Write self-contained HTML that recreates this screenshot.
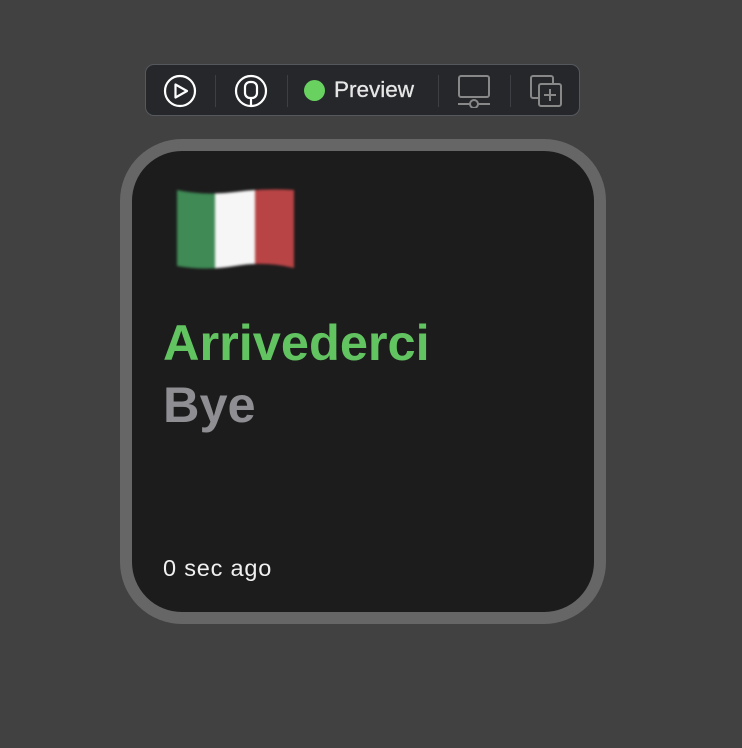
<!DOCTYPE html>
<html><head><style>
body{margin:0;width:742px;height:748px;background:#414141;position:relative;overflow:hidden;font-family:"Liberation Sans",sans-serif}
.tb{position:absolute;left:145px;top:64px;width:433px;height:50px;background:#25272b;border:1px solid #55585d;border-radius:9px}
.sep{position:absolute;top:10px;width:1px;height:32px;background:#3d3f44}
.frame{position:absolute;left:120px;top:139px;width:462px;height:461px;border:12px solid #666;border-radius:62px;background:#1c1c1c}
.t{position:absolute;left:163px;font-weight:bold;font-size:50.5px;white-space:nowrap}
</style></head><body>
<div class="tb">
<svg style="position:absolute;left:17px;top:9px" width="34" height="34" viewBox="0 0 34 34"><circle cx="17" cy="17" r="15" fill="none" stroke="#fff" stroke-width="2.2"/><path d="M12.5 10.5 L24 17 L12.5 23.5 Z" fill="none" stroke="#fff" stroke-width="2.2" stroke-linejoin="round"/></svg>
<div class="sep" style="left:69px"></div>
<svg style="position:absolute;left:88px;top:9px" width="34" height="34" viewBox="0 0 34 34"><circle cx="17" cy="17" r="15" fill="none" stroke="#fff" stroke-width="2.2"/><rect x="11" y="8" width="12" height="16" rx="5" fill="none" stroke="#fff" stroke-width="2.2"/><path d="M17 24V32" stroke="#fff" stroke-width="2.2"/></svg>
<div class="sep" style="left:141px"></div>
<div style="position:absolute;left:158px;top:15px;width:21px;height:21px;border-radius:50%;background:#68d15f"></div>
<div style="position:absolute;left:188px;top:12px;color:#e6e6e6;font-size:22.5px;-webkit-text-stroke:0.3px #e6e6e6">Preview</div>
<div class="sep" style="left:292px"></div>
<svg style="position:absolute;left:310px;top:9px" width="36" height="34" viewBox="0 0 36 34"><rect x="3" y="2" width="30" height="21" rx="2" fill="none" stroke="#888" stroke-width="2"/><path d="M2 30H14M22 30H34" stroke="#888" stroke-width="2"/><circle cx="18" cy="30" r="4" fill="none" stroke="#888" stroke-width="2"/></svg>
<div class="sep" style="left:364px"></div>
<svg style="position:absolute;left:383px;top:9px" width="36" height="36" viewBox="0 0 36 36"><path d="M10 24H4a2 2 0 0 1-2-2V4a2 2 0 0 1 2-2h18a2 2 0 0 1 2 2v6" fill="none" stroke="#888" stroke-width="2"/><rect x="10" y="10" width="22" height="22" rx="2" fill="none" stroke="#888" stroke-width="2"/><path d="M21 15V27M15 21H27" stroke="#888" stroke-width="2"/></svg>
</div>
<div class="frame"></div>
<svg style="position:absolute;left:175px;top:188px;filter:blur(1.2px)" width="121" height="86" viewBox="0 0 121 86">
<defs><clipPath id="c"><path d="M2 2 Q30 8 60 4 T119 2 V80 Q90 73 60 78 T2 78 Z"/></clipPath></defs>
<g clip-path="url(#c)"><rect x="0" y="0" width="41" height="86" fill="#3f8a55"/><rect x="40" y="0" width="41" height="86" fill="#f6f6f6"/><rect x="80" y="0" width="41" height="86" fill="#b94446"/></g></svg>
<div class="t" style="top:313px;color:#62c461">Arrivederci</div>
<div class="t" style="top:375px;color:#8e8e93">Bye</div>
<div style="position:absolute;left:163px;top:555px;color:#f0f0f0;font-size:23.5px;letter-spacing:0.8px">0 sec ago</div>
</body></html>
